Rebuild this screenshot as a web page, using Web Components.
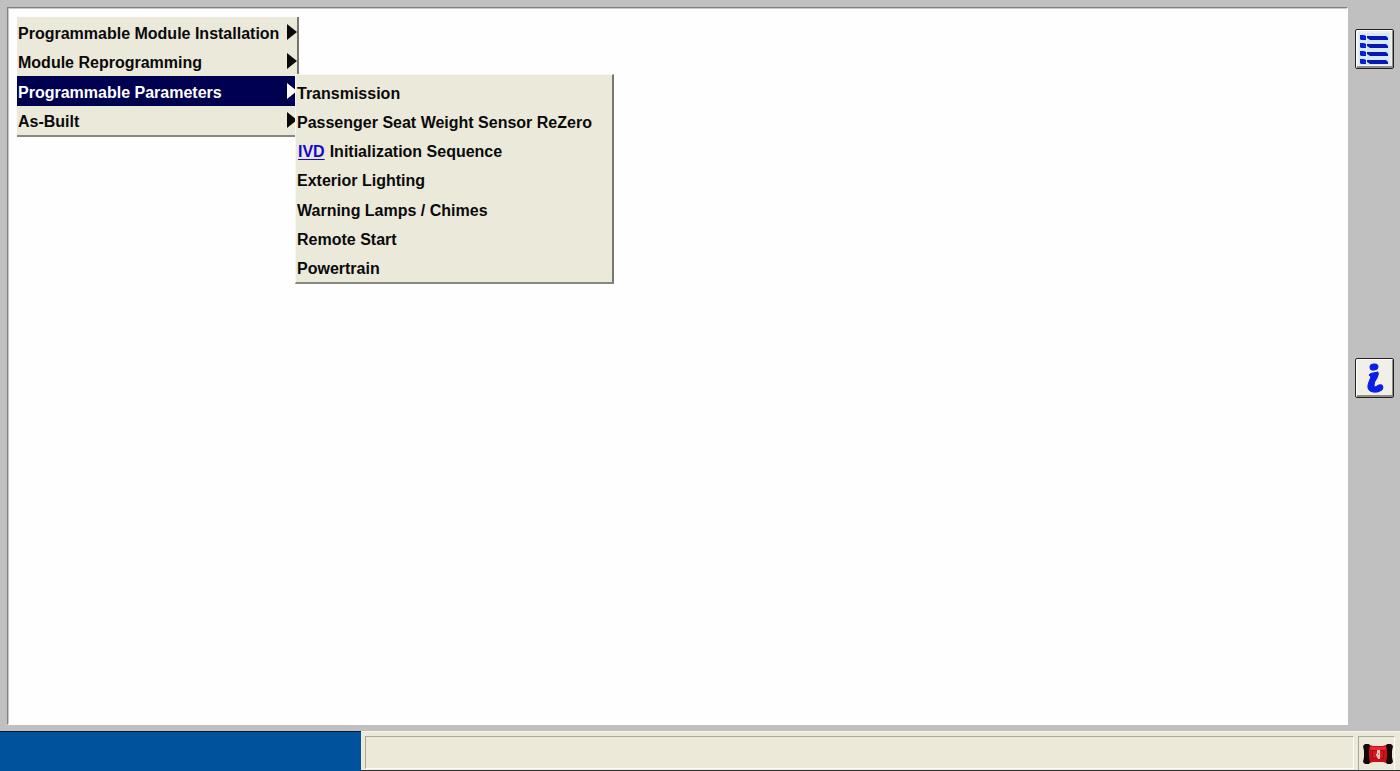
<!DOCTYPE html>
<html lang="en">
<head>
<meta charset="utf-8">
<title>Module Programming</title>
<style>
  html, body { margin: 0; height: 100%; }
  body { font: bold 16px/20px "Liberation Sans", Arial, sans-serif; color: #0a0a0a; background: #c0c0c0; }
</style>
</head>
<body>
<app-shell>
  <menu-panel>
    <menu-entry arrow>Programmable Module Installation</menu-entry>
    <menu-entry arrow>Module Reprogramming</menu-entry>
    <menu-entry arrow selected>Programmable Parameters
      <menu-panel slot="submenu" sub>
        <menu-entry>Transmission</menu-entry>
        <menu-entry>Passenger Seat Weight Sensor ReZero</menu-entry>
        <menu-entry><glossary-link slot="prefix">IVD</glossary-link>Initialization Sequence</menu-entry>
        <menu-entry>Exterior Lighting</menu-entry>
        <menu-entry>Warning Lamps / Chimes</menu-entry>
        <menu-entry>Remote Start</menu-entry>
        <menu-entry>Powertrain</menu-entry>
      </menu-panel>
    </menu-entry>
    <menu-entry arrow>As-Built</menu-entry>
  </menu-panel>
  <tool-button slot="tools" label="Menu list">
    <svg viewBox="0 0 36 36" width="36" height="36" aria-hidden="true">
      <path fill="#d5e9f8" d="M2 2h31v32H2z"/>
      <g fill="#0a1fd0">
        <path d="M3 4h4l2 1v4H4l-1-1zM3 12h4l2 1v4H4l-1-1zM3 20h4l2 1v4H4l-1-1zM3 28h4l2 1v4H4l-1-1z"/>
        <path fill="#0618b8" d="M10 5h19l2 2v2H13l-3-2zM10 13h19l2 2v2H13l-3-2zM10 21h19l2 2v2H13l-3-2zM10 29h19l2 2v2H13l-3-2z"/>
      </g>
    </svg>
  </tool-button>
  <tool-button slot="tools" label="Information">
    <svg viewBox="0 0 36 36" width="36" height="36" aria-hidden="true">
      <g fill="#0b1ee8" stroke="#0b1ee8" stroke-linejoin="round">
        <ellipse cx="17" cy="7" rx="4" ry="3" transform="rotate(-12 17 7)"/>
        <path d="M12 15Q13 13 16 13L21 12Q22 14 20 18Q17 22 17 25Q17 28 20 26Q22 24 25 25Q27 27 25 30Q21 33 16 32Q10 31 11 25Q12 21 14 17Z"/>
      </g>
    </svg>
  </tool-button>
  <status-bar slot="status"></status-bar>
</app-shell>

<script>
const define = (name, html, setup) => {
  const template = document.createElement('template');
  template.innerHTML = html;
  customElements.define(name, class extends HTMLElement {
    constructor() {
      super();
      this.attachShadow({ mode: 'open' }).append(template.content.cloneNode(true));
    }
    connectedCallback() { if (setup) setup(this); }
  });
};

define('app-shell', `
<style>
  :host { display: grid; grid-template: 1fr auto / 1fr 52px; min-height: 100vh; }
  main { margin: 7px 0 6px 7px; padding: 9px; background: #fefefe; border: 1px solid #fff; border-top-color: #808080; border-left-color: #808080; box-shadow: inset 1px 1px #c8c8c8; }
  aside { display: grid; grid-template-rows: 1fr 1fr; justify-items: center; padding: 29px 0 44px; }
  footer { grid-column: 1 / -1; }
</style>
<main><slot></slot></main>
<aside><slot name="tools"></slot></aside>
<footer><slot name="status"></slot></footer>`);

define('menu-panel', `
<style>
  :host { display: grid; grid-auto-rows: 1fr; box-sizing: border-box; width: 282px; height: 120px; background: #ebe9da; border-right: 2px solid #77776f; border-bottom: 2px solid #88887f; }
  :host([sub]) { position: absolute; z-index: 1; left: 278px; top: -2px; width: 319px; height: 210px; padding-top: 2px; border-left: 1px solid #f8f7f0; border-top: 1px solid #f8f7f0; color: #0a0a0a; }
</style>
<slot></slot>`);

define('menu-entry', `
<style>
  :host { position: relative; display: flex; align-items: center; color: #0a0a0a; }
  :host([selected]) { background: #000050; color: #fff; }
  button { flex: 1; display: flex; align-items: center; justify-content: space-between; align-self: stretch; padding: 4px 0 0 1px; margin: 0; border: 0; background: none; color: inherit; font: inherit; text-align: left; white-space: nowrap; }
  svg { display: none; fill: currentColor; margin-bottom: 4px; }
  :host([arrow]) svg { display: block; }
</style>
<slot name="prefix"></slot>
<button type="button"><span><slot></slot></span><svg width="10" height="16" viewBox="0 0 10 16" aria-hidden="true"><path d="M0 0l10 8-10 8z"/></svg></button>
<slot name="submenu"></slot>`);

define('glossary-link', `
<style>
  :host { display: block; padding: 4px 4px 0 2px; }
  a { color: #1408d0; text-decoration: underline; text-decoration-thickness: 1px; text-underline-offset: 2px; }
</style>
<a href="#ivd"><slot></slot></a>`);

define('tool-button', `
<style>
  :host { display: block; }
  button { display: block; padding: 0; margin: 0; background: #f1f0e8; border: 1px solid #222; border-radius: 2px; box-shadow: inset 1px 1px #fff, inset -1px -2px #8d8d86; }
  ::slotted(svg) { display: block; margin: 1px 0 1px 1px; }
</style>
<button type="button"><slot></slot></button>`, el => {
  el.shadowRoot.querySelector('button').setAttribute('aria-label', el.getAttribute('label'));
});

define('status-bar', `
<style>
  :host { display: grid; grid-template-columns: 361px 1fr 37px 1px; column-gap: 4px; height: 40px; background: #ece9d8; box-shadow: inset 0 1px #f6f4e8, inset 0 -1px #33322c; }
  .brand { background: #00529c; border-top: 1px solid #001a38; }
  .field { margin: 5px 0 2px; border: 1px solid #aaa899; border-right-color: #fff; border-bottom-color: #fff; }
  .device { display: flex; align-items: center; justify-content: center; padding-left: 3px; margin: 5px 0 1px; border: 1px solid #aaa899; border-right-color: #fff; border-bottom: 0; }
</style>
<div class="brand"></div>
<div class="field" role="status"></div>
<div class="device">
  <svg width="30" height="24" viewBox="0 0 30 24" role="img" aria-label="Interface connected">
    <path fill="#c90f18" d="M4 2l6 2h10l6-2v20l-6-2H10l-6 2z"/>
    <path fill="#ea2a30" d="M8 5h14l2-2v3l-3 2H9L6 6V3z"/>
    <path fill="#a30c14" d="M9 8h12v9H9z"/>
    <path fill="#d51b22" d="M10 9h10v7H10z"/>
    <path fill="#160708" d="M0 4l2-2h4l1 2-1 4v7l1 5-1 2H2l-2-2 1-5V9zM30 4l-2-2h-4l-1 2 1 4v7l-1 5 1 2h4l2-2-1-5V9z"/>
    <path fill="#edc6bd" d="M14 8h3v9h-2l-1-2-1-2 1-2z"/>
    <path fill="#c66a64" d="M15 11h1v2h-1z"/>
  </svg>
</div>`);
</script>
</body>
</html>
